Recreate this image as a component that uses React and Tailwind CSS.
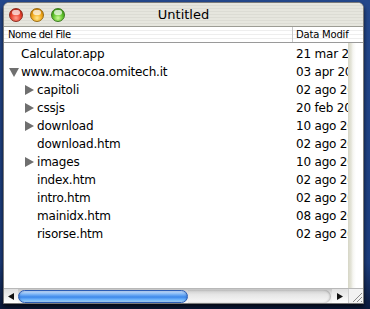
import React from 'react';

const rows = [
  { name: 'Calculator.app', date: '21 mar 2005, 10:12', level: 0, arrow: null },
  { name: 'www.macocoa.omitech.it', date: '03 apr 2005, 18:40', level: 0, arrow: 'down' },
  { name: 'capitoli', date: '02 ago 2004, 12:03', level: 1, arrow: 'right' },
  { name: 'cssjs', date: '20 feb 2005, 09:31', level: 1, arrow: 'right' },
  { name: 'download', date: '10 ago 2004, 16:22', level: 1, arrow: 'right' },
  { name: 'download.htm', date: '02 ago 2004, 12:03', level: 1, arrow: null },
  { name: 'images', date: '10 ago 2004, 16:22', level: 1, arrow: 'right' },
  { name: 'index.htm', date: '02 ago 2004, 12:03', level: 1, arrow: null },
  { name: 'intro.htm', date: '02 ago 2004, 12:03', level: 1, arrow: null },
  { name: 'mainidx.htm', date: '08 ago 2004, 11:47', level: 1, arrow: null },
  { name: 'risorse.htm', date: '02 ago 2004, 12:03', level: 1, arrow: null },
];

function Light({ color }) {
  const styles = {
    red: 'bg-[radial-gradient(circle_at_50%_75%,#ffa090_0%,#ea4430_45%,#a01808_100%)] border-[#8a2a1e]',
    yellow: 'bg-[radial-gradient(circle_at_50%_75%,#ffe890_0%,#f2aa1c_45%,#b06a00_100%)] border-[#9a6a10]',
    green: 'bg-[radial-gradient(circle_at_50%_75%,#d0fa98_0%,#60c42c_45%,#2a7a0a_100%)] border-[#3a7a1e]',
  };
  return (
    <div className={`w-[14px] h-[14px] rounded-full border flex justify-center ${styles[color]}`}>
      <div className="w-[8px] h-[5px] mt-[1px] rounded-full bg-white/70" />
    </div>
  );
}

function Arrow({ dir }) {
  if (dir === 'down') {
    return (
      <svg width="10" height="9" viewBox="0 0 10 9">
        <polygon points="0,0 10,0 5,9" fill="#6f6f6f" />
      </svg>
    );
  }
  if (dir === 'right') {
    return (
      <svg width="9" height="10" viewBox="0 0 9 10">
        <polygon points="0,0 9,5 0,10" fill="#6f6f6f" />
      </svg>
    );
  }
  return null;
}

export default function App() {
  return (
    <div className="w-[370px] h-[309px] overflow-hidden bg-[linear-gradient(to_bottom,#24488c,#1b3c7c_85%,#0c1a3c)] pl-[3px] pt-[2px]">
      <div
        className="w-[361px] h-[302px] flex flex-col rounded-t-[6px] overflow-hidden border border-[#7a7a7a] bg-white shadow-[0_3px_4px_rgba(0,0,0,0.7)]"
        style={{ fontFamily: '"DejaVu Sans", sans-serif' }}
      >
        {/* title bar */}
        <div className="h-[24px] shrink-0 grid grid-cols-[1fr_auto_1fr] items-center border-b border-[#9c9c94] bg-[repeating-linear-gradient(to_bottom,#e6e6de_0px,#e6e6de_2px,#dcdcd4_2px,#dcdcd4_3px)]">
          <div className="flex items-center gap-[7px] pl-[5px] pt-[1px]">
            <Light color="red" />
            <Light color="yellow" />
            <Light color="green" />
          </div>
          <div className="text-[13px] text-black">Untitled</div>
          <div />
        </div>

        {/* column header */}
        <div className="h-[16px] shrink-0 flex border-b border-[#9a9a9a] bg-[repeating-linear-gradient(to_bottom,#ffffff_0px,#ffffff_3px,#eeeeee_3px,#eeeeee_4px)] text-[10px] tracking-[-0.4px] leading-[16px] text-black">
          <div className="w-[289px] pl-[4px] border-r border-[#c8c8c8]">Nome del File</div>
          <div className="pl-[3px] tracking-[-0.2px]">Data Modif</div>
        </div>

        {/* body */}
        <div className="flex-1 flex min-h-0">
          <div className="w-[344px] pt-[2px] overflow-hidden text-[12px] tracking-[-0.2px] text-black">
            {rows.map((r) => (
              <div key={r.name} className="h-[18px] flex items-center">
                <div className="w-[289px] flex items-center" style={{ paddingLeft: 5 + r.level * 16 }}>
                  <div className="w-[12px] flex items-center">
                    <Arrow dir={r.arrow} />
                  </div>
                  <span className="whitespace-nowrap">{r.name}</span>
                </div>
                <div className="pl-[3px] whitespace-nowrap overflow-hidden flex-1">{r.date}</div>
              </div>
            ))}
          </div>
          <div className="flex-1 bg-[linear-gradient(to_right,#d6d6c6,#e4e4d8_3px,#f6f6f2_5px,#ffffff_8px)]" />
        </div>

        {/* horizontal scrollbar */}
        <div className="h-[15px] shrink-0 flex border-t border-[#b8b8b8] bg-[linear-gradient(to_bottom,#c4c4c4,#e8e8e8_40%,#f8f8f8)]">
          <div className="w-[14px] flex items-center justify-center bg-[linear-gradient(to_bottom,#e0e0e0,#ffffff)]">
            <svg width="6" height="7" viewBox="0 0 6 7">
              <polygon points="6,0 0,3.5 6,7" fill="#111" />
            </svg>
          </div>
          <div className="flex-1 flex items-center pr-[1px]">
            <div className="w-[170px] h-[13px] rounded-full border border-[#2a5cb4] bg-[linear-gradient(to_bottom,#d0e6ff,#7ab4f6_30%,#3c88ea_55%,#7cc0ff_85%,#c0e4ff)] shadow-[inset_0_0_2px_rgba(0,40,120,0.5)]" />
            <div className="flex-1 h-[13px] rounded-r-full bg-[linear-gradient(to_bottom,#cccccc,#e6e6e6_35%,#f8f8f8)] shadow-[inset_-1px_0_2px_rgba(0,0,0,0.25)]" />
          </div>
          <div className="w-[16px] flex items-center justify-center bg-[linear-gradient(to_bottom,#e0e0e0,#ffffff)]">
            <svg width="6" height="7" viewBox="0 0 6 7">
              <polygon points="0,0 6,3.5 0,7" fill="#111" />
            </svg>
          </div>
          <div className="w-[15px] flex items-end justify-end bg-[#f2f2f2] border-l border-[#d0d0d0]">
            <svg width="13" height="13" viewBox="0 0 13 13">
              <line x1="12" y1="3" x2="3" y2="12" stroke="#8a8a8a" strokeWidth="1" />
              <line x1="12" y1="7" x2="7" y2="12" stroke="#8a8a8a" strokeWidth="1" />
              <line x1="12" y1="11" x2="11" y2="12" stroke="#8a8a8a" strokeWidth="1" />
            </svg>
          </div>
        </div>
      </div>
    </div>
  );
}
